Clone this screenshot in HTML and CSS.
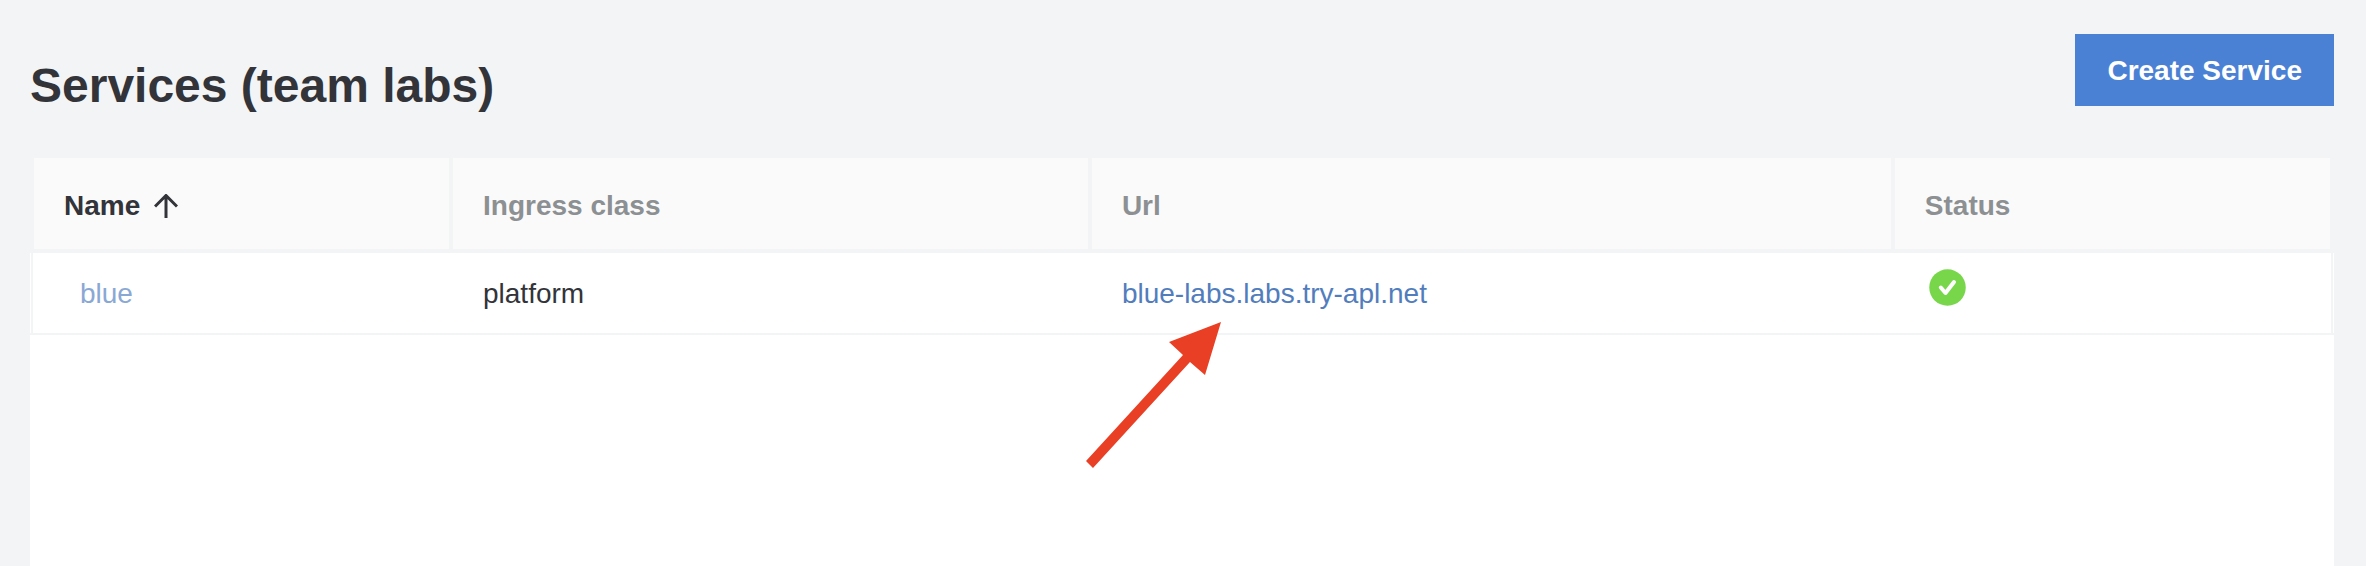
FILE: index.html
```html
<!DOCTYPE html>
<html lang="en">
<head>
<meta charset="utf-8">
<title>Services (team labs)</title>
<link rel="stylesheet" href="styles.css">
</head>
<body>
<main class="page">
  <header class="page-header">
    <h1 class="page-title">Services (team labs)</h1>
    <button class="create-button" type="button">Create Service</button>
  </header>
  <section class="panel">
    <table class="services">
      <colgroup>
        <col class="col-name">
        <col class="col-ingress">
        <col class="col-url">
        <col class="col-status">
      </colgroup>
      <thead>
        <tr>
          <th scope="col" aria-sort="ascending">
            <button class="sort-button" type="button">Name
              <svg class="sort-icon" viewBox="0 0 24 24" aria-hidden="true"><path d="M12 24V2M1 12.500L12 1.500L23 12.500" fill="none" stroke="currentColor" stroke-width="3"/></svg>
            </button>
          </th>
          <th scope="col">Ingress class</th>
          <th scope="col">Url</th>
          <th scope="col">Status</th>
        </tr>
      </thead>
      <tbody>
        <tr>
          <td><a class="name-link" href="#blue">blue</a></td>
          <td>platform</td>
          <td><span class="url-cell"><a class="url-link" href="#blue-labs">blue-labs.labs.try-apl.net</a>
            <svg class="pointer" viewBox="0 0 136 148" aria-hidden="true"><path d="M135 1L119 54L104 41L7 147L0 140L97 34L83 21Z" fill="#e94025"/></svg></span></td>
          <td class="status-cell"><svg class="status-icon" viewBox="0 0 37 37" role="img" aria-label="Healthy"><circle cx="18.500" cy="18.500" r="18.250" fill="#78d64b"/><path d="M11.800 18.500L16.500 24L25 13" fill="none" stroke="#fff" stroke-width="4" stroke-linecap="round" stroke-linejoin="round"/></svg></td>
        </tr>
      </tbody>
    </table>
  </section>
</main>
</body>
</html>
```
FILE: styles.css
```css
* {
  box-sizing: border-box;
}

body {
  margin: 0;
  background: #f3f4f6;
  color: #32343a;
  font-family: "Liberation Sans", Arial, sans-serif;
  font-size: 28px;
  line-height: 32px;
}

.page {
  display: flex;
  flex-direction: column;
  min-height: 100vh;
  padding: 34px 32px 0 30px;
}

.page-header {
  display: flex;
  align-items: flex-start;
  justify-content: space-between;
  padding-bottom: 48px;
}

.page-title {
  margin: 0;
  padding-top: 28px;
  font-size: 48px;
  line-height: 48px;
}

.create-button {
  padding: 21px 32px 19px;
  border: 0;
  background: #4b81d4;
  color: #fff;
  font: inherit;
  font-weight: bold;
}

.panel {
  flex: 1;
  background: #fff;
}

.services {
  width: 100%;
  table-layout: fixed;
  border-collapse: separate;
  border-spacing: 0;
}

.col-name {
  width: 18.36%;
}

.col-ingress {
  width: 27.73%;
}

.col-url {
  width: 34.85%;
}

th {
  padding: 32px 30px 27px;
  border-right: 4px solid #f3f4f6;
  border-bottom: 4px solid #f3f4f6;
  background: #fafafa;
  color: #8c9092;
  text-align: left;
}

th:first-child {
  border-left: 4px solid #f3f4f6;
}

.sort-button {
  display: flex;
  align-items: center;
  gap: 14px;
  padding: 0;
  border: 0;
  background: none;
  color: #32343a;
  font: inherit;
}

.sort-icon {
  width: 24px;
  height: 24px;
}

td {
  height: 82px;
  padding: 2px 30px 0;
  border-bottom: 2px solid #f3f4f6;
}

td:first-child {
  padding-left: 34px;
  box-shadow: inset 1px 0 #fff, inset 3px 0 #f3f4f6;
}

td:last-child {
  box-shadow: inset -1px 0 #fff, inset -3px 0 #f3f4f6;
}

.name-link {
  padding-left: 16px;
  color: #8aa8d4;
  text-decoration: none;
}

.url-cell {
  position: relative;
}

.url-link {
  color: #527dbd;
  text-decoration: none;
}

.pointer {
  position: absolute;
  top: 43px;
  left: -36px;
  width: 136px;
  height: 148px;
}

.status-cell {
  padding-top: 16px;
  padding-left: 34px;
  vertical-align: top;
}

.status-icon {
  display: block;
  width: 37px;
  height: 37px;
}
```
